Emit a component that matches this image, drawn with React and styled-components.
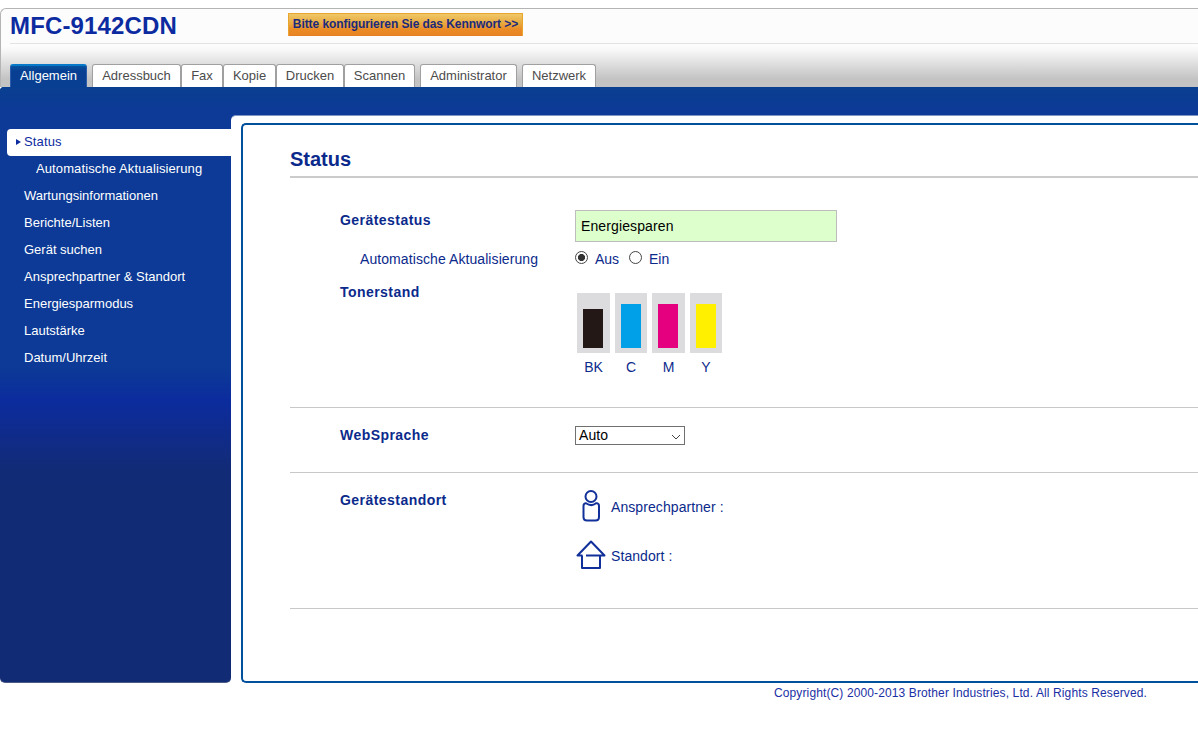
import React, { useState } from 'react';
import styled, { createGlobalStyle } from 'styled-components';

const GlobalStyle = createGlobalStyle`
  * {
    box-sizing: border-box;
  }

  body {
    margin: 0;
    background: #fff;
    color: #0b2a8c;
    font-family: 'Liberation Sans', Arial, sans-serif;
    font-size: 14px;
    overflow: hidden;
  }

  ul,
  h1,
  h2,
  h3 {
    margin: 0;
    padding: 0;
    list-style: none;
  }
`;

const blueFade = `linear-gradient(
  #093f90,
  #0c3a96 22px,
  #0c3a96 280px,
  #0c2c9e 313px,
  #122b78 380px,
  #122b75 400px
)`;

// Frame
const Page = styled.div`
  height: 737px;
  padding-top: 8px;
  overflow: hidden;
`;

const Header = styled.header`
  display: flex;
  flex-direction: column;
  height: 79px;
  padding-left: 9px;
  border: 1px solid #b4b4b4;
  border-width: 1px 0 0 1px;
  border-top-left-radius: 6px;
  background: linear-gradient(#fcfcfc 0 37px, #f6f6f6 42px, #c3c3c3 70px);
`;

const Brand = styled.div`
  display: flex;
  align-items: flex-start;
  height: 35px;
  border-bottom: 1px solid #e3e3e3;
`;

const Model = styled.h1`
  width: 278px;
  font-size: 24px;
  line-height: 34px;
  letter-spacing: 0.15px;
  color: #0d2ba0;
`;

const PasswordButton = styled.button`
  width: 235px;
  height: 23px;
  margin-top: 4px;
  padding: 0;
  border: 1px solid #e9a52c;
  border-bottom-color: #e57f22;
  border-radius: 1px;
  background: linear-gradient(#efc868, #e8a83e 45%, #ea8a25 75%, #e98425);
  color: #1c2a7c;
  font: bold 12px 'Liberation Sans', Arial, sans-serif;
  line-height: 19px;
  letter-spacing: -0.07px;
  white-space: nowrap;
`;

const Tabs = styled.nav`
  display: flex;
  margin-top: 20px;
`;

const Tab = styled.a`
  width: ${({ $width }) => $width}px;
  height: 23px;
  margin-right: ${({ $gap }) => $gap || 0}px;
  border: 1px solid ${({ $active }) => ($active ? '#2a5cab' : '#a0a0a0')};
  border-top: ${({ $active }) => ($active ? '2px solid #0878c8' : '1px solid #a0a0a0')};
  border-bottom: 0;
  border-radius: 3px 3px 0 0;
  background: ${({ $active }) =>
    $active ? 'linear-gradient(#06529f, #093f92 5px)' : '#fff'};
  color: ${({ $active }) => ($active ? '#fff' : '#4c4c4c')};
  font-size: 13px;
  line-height: ${({ $active }) => ($active ? 20 : 22)}px;
  text-align: center;
  white-space: nowrap;
`;

// only the strip above the main area is blue, the sidebar paints its own
const Body = styled.div`
  display: flex;
  height: 596px;
  border-top-left-radius: 4px;
  background: ${blueFade} 0 0 / 100% 60px no-repeat;
`;

const Sidebar = styled.ul`
  flex: 0 0 231px;
  padding: 42px 0 0 7px;
  border-bottom: 1px solid #4c5a86;
  border-radius: 4px 0 5px 5px;
  background: ${blueFade};
`;

const SideItem = styled.li`
  display: flex;
  align-items: center;
  height: 27px;
  padding-left: ${({ $nested }) => ($nested ? 29 : 17)}px;
  color: #fff;
  font-size: 13px;
  line-height: 15px;
  padding-bottom: 2px;
  letter-spacing: ${({ $nested }) => ($nested ? 0.11 : 0)}px;
`;

const ActiveItem = styled(SideItem)`
  padding-left: 9px;
  border-radius: 4px 0 0 4px;
  background: #fff;
  color: #0d2ba0;
  letter-spacing: 0.15px;
`;

const Arrow = styled.span`
  margin-right: 3px;
  border: solid transparent;
  border-width: 3px 0 3px 5px;
  border-left-color: #0d2ba0;
`;

const Main = styled.main`
  flex: 1;
  display: flex;
  margin-top: 28px;
  padding: 7px 0 0 10px;
  border-top: 1px solid #7f97c4;
  border-top-left-radius: 5px;
  background: #fff;
`;

const Panel = styled.section`
  flex: 1;
  padding: 0 0 0 47px;
  border: 2px solid #00509c;
  border-right: 0;
  border-radius: 5px 0 0 5px;
`;

const Title = styled.h2`
  height: 53px;
  padding-top: 23px;
  border-bottom: 2px solid #cbcbcb;
  font-size: 20px;
  line-height: 23px;
`;

// Settings rows
const Section = styled.div`
  height: ${({ $height }) => $height}px;
  padding: ${({ $top }) => $top}px 0 0 50px;
  border-bottom: 1px solid #c8c8c8;
`;

const Row = styled.div`
  display: grid;
  grid-template-columns: 235px 1fr;
  height: ${({ $height }) => $height}px;
`;

const Label = styled.h3`
  font-size: 14px;
  line-height: 20px;
  letter-spacing: 0.45px;
`;

const SubLabel = styled.div`
  padding: 7px 0 0 20px;
  line-height: 20px;
  letter-spacing: 0.08px;
`;

const StatusBox = styled.div`
  width: 262px;
  height: 32px;
  padding-left: 5px;
  border: 1px solid #bdbdbd;
  background: #dfc;
  color: #000;
  line-height: 30px;
  letter-spacing: 0.12px;
`;

const RadioGroup = styled.div`
  display: flex;
  align-items: flex-start;
  padding-top: 7px;
`;

const RadioLabel = styled.label`
  display: flex;
  width: 54px;
  line-height: 20px;
`;

const Radio = styled.input`
  appearance: none;
  width: 13px;
  height: 13px;
  margin: 2px 7px 0 0;
  border: 1px solid #444;
  border-radius: 50%;
  background: #fff;

  &:checked {
    background: radial-gradient(circle, #333 0 3.2px, #fff 3.9px);
  }
`;

const Toners = styled.div`
  display: flex;
  gap: 5px;
  padding: 11px 0 0 2px;
`;

const Toner = styled.div`
  width: ${({ $width }) => $width}px;
  text-align: center;
  line-height: 16px;
`;

const TonerTrack = styled.div`
  display: flex;
  align-items: flex-end;
  height: 60px;
  margin-bottom: 6px;
  padding: 0 0 5px 6px;
  background: #dcdcde;
`;

const TonerLevel = styled.div`
  width: 20px;
  background: ${({ $color }) => $color};
`;

const Select = styled.button`
  display: flex;
  align-items: center;
  justify-content: space-between;
  width: 110px;
  height: 19px;
  margin-top: 1px;
  padding: 0 3px 1px;
  border: 1px solid #707070;
  background: #fff;
  color: #000;
  font: 14px 'Liberation Sans', Arial, sans-serif;
  letter-spacing: 0.1px;

  svg {
    margin-top: 3px;
  }
`;

const Locations = styled.div`
  margin-top: -8px;
`;

const Location = styled.div`
  display: flex;
  align-items: center;
  height: 49px;
  gap: 4px;
  letter-spacing: 0.08px;

  svg {
    margin-bottom: 2px;
  }
`;

const Footer = styled.footer`
  padding: 3px 51px 0 0;
  color: #1a2fa5;
  font-size: 12px;
  line-height: 14px;
  letter-spacing: 0.12px;
  text-align: right;
`;

const tabs = [
  { name: 'Allgemein', width: 77, gap: 5 },
  { name: 'Adressbuch', width: 89 },
  { name: 'Fax', width: 42 },
  { name: 'Kopie', width: 53 },
  { name: 'Drucken', width: 68 },
  { name: 'Scannen', width: 71, gap: 5 },
  { name: 'Administrator', width: 97, gap: 5 },
  { name: 'Netzwerk', width: 74 },
];

const sideItems = [
  'Wartungsinformationen',
  'Berichte/Listen',
  'Gerät suchen',
  'Ansprechpartner & Standort',
  'Energiesparmodus',
  'Lautstärke',
  'Datum/Uhrzeit',
];

const toners = [
  { name: 'BK', color: '#231815', level: 39, width: 33 },
  { name: 'C', color: '#00a0e9', level: 44, width: 32 },
  { name: 'M', color: '#e4007f', level: 44, width: 33 },
  { name: 'Y', color: '#fff000', level: 44, width: 32 },
];

const PersonIcon = () => (
  <svg width='32' height='34' viewBox='0 0 32 34' fill='none' stroke='#12309a' strokeWidth='2'>
    <circle cx='16' cy='7.5' r='5.5' />
    <path d='M11 14.2H10.5Q8.500 14.5 8.500 17V28Q8.500 31.5 12 31.5H20.5Q24 31.5 24 28V17Q24 14.5 22 14.2H21Q16.5 18 11 14.2Z' />
  </svg>
);

const HouseIcon = () => (
  <svg width='32' height='32' viewBox='0 0 32 32' fill='none' stroke='#12309a' strokeWidth='2'>
    <path
      d='M11 16.5H27M7 16.5V29H25V16.5M7.5 16.5H2.5L16 2.5L29.5 16.5H25'
      strokeLinejoin='round'
    />
  </svg>
);

const App = () => {
  const [refresh, setRefresh] = useState('Aus');

  return (
    <>
      <GlobalStyle />
      <Page>
        <Header>
          <Brand>
            <Model>MFC-9142CDN</Model>
            <PasswordButton>Bitte konfigurieren Sie das Kennwort &gt;&gt;</PasswordButton>
          </Brand>
          <Tabs>
            {tabs.map(({ name, width, gap }, i) => (
              <Tab key={name} $width={width} $gap={gap} $active={i === 0}>
                {name}
              </Tab>
            ))}
          </Tabs>
        </Header>
        <Body>
          <Sidebar>
            <ActiveItem>
              <Arrow />
              Status
            </ActiveItem>
            <SideItem $nested>Automatische Aktualisierung</SideItem>
            {sideItems.map((item) => (
              <SideItem key={item}>{item}</SideItem>
            ))}
          </Sidebar>
          <Main>
            <Panel>
              <Title>Status</Title>
              <Section $height={230} $top={32}>
                <Row $height={32}>
                  <Label>Gerätestatus</Label>
                  <StatusBox>Energiesparen</StatusBox>
                </Row>
                <Row $height={40}>
                  <SubLabel>Automatische Aktualisierung</SubLabel>
                  <RadioGroup>
                    {['Aus', 'Ein'].map((option) => (
                      <RadioLabel key={option}>
                        <Radio
                          type='radio'
                          name='refresh'
                          checked={refresh === option}
                          onChange={() => setRefresh(option)}
                        />
                        {option}
                      </RadioLabel>
                    ))}
                  </RadioGroup>
                </Row>
                <Row>
                  <Label>Tonerstand</Label>
                  <Toners>
                    {toners.map(({ name, color, level, width }) => (
                      <Toner key={name} $width={width}>
                        <TonerTrack>
                          <TonerLevel $color={color} style={{ height: level }} />
                        </TonerTrack>
                        {name}
                      </Toner>
                    ))}
                  </Toners>
                </Row>
              </Section>
              <Section $height={65} $top={17}>
                <Row>
                  <Label>WebSprache</Label>
                  <Select>
                    Auto
                    <svg width='10' height='6' viewBox='0 0 10 6' fill='none' stroke='#444'>
                      <path d='M1 1L5 5L9 1' />
                    </svg>
                  </Select>
                </Row>
              </Section>
              <Section $height={136} $top={17}>
                <Row>
                  <Label>Gerätestandort</Label>
                  <Locations>
                    <Location>
                      <PersonIcon />
                      Ansprechpartner :
                    </Location>
                    <Location>
                      <HouseIcon />
                      Standort :
                    </Location>
                  </Locations>
                </Row>
              </Section>
            </Panel>
          </Main>
        </Body>
        <Footer>Copyright(C) 2000-2013 Brother Industries, Ltd. All Rights Reserved.</Footer>
      </Page>
    </>
  );
};

export default App;
